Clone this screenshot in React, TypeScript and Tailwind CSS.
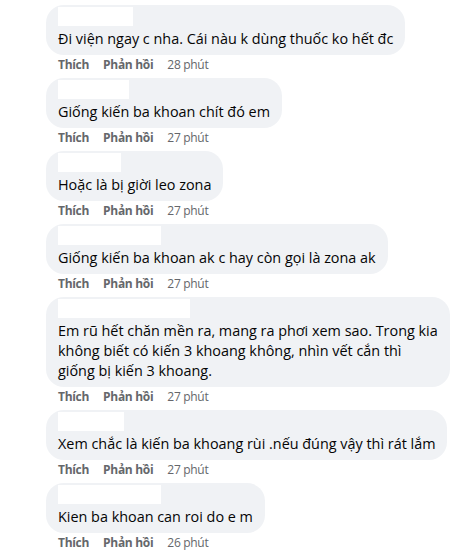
import React from "react";

type Comment = { nameW: number; text: string; time: string };

const comments: Comment[] = [
  { nameW: 75, text: "Đi viện ngay c nha. Cái nàu k dùng thuốc ko hết đc", time: "28 phút" },
  { nameW: 71, text: "Giống kiến ba khoan chít đó em", time: "27 phút" },
  { nameW: 63, text: "Hoặc là bị giời leo zona", time: "27 phút" },
  { nameW: 103, text: "Giống kiến ba khoan ak c hay còn gọi là zona ak", time: "27 phút" },
  {
    nameW: 132,
    text: "Em rũ hết chăn mền ra, mang ra phơi xem sao. Trong kia không biết có kiến 3 khoang không, nhìn vết cắn thì giống bị kiến 3 khoang.",
    time: "27 phút",
  },
  { nameW: 66, text: "Xem chắc là kiến ba khoang rùi .nếu đúng vậy thì rát lắm", time: "27 phút" },
  { nameW: 103, text: "Kien ba khoan can roi do e m", time: "26 phút" },
];

export default function App() {
  return (
    <div className="w-[474px] h-[557px] bg-white overflow-hidden pl-[46px] pt-[5px] font-['Open_Sans',sans-serif]">
      <div className="flex flex-col">
        {comments.map((c, i) => (
          <div key={i} className="flex flex-col items-start">
            <div className="max-w-[404px] rounded-[18px] bg-[#f0f2f5] px-3 pt-[2px] pb-[6px]">
              <div className="h-[19px] bg-white" style={{ width: c.nameW }} />
              <p className="mt-[3px] text-[14.4px] leading-[20px] text-[#050505]">{c.text}</p>
            </div>
            <div className="flex items-center gap-[14px] pl-3 pt-[2px] pb-[5px] text-[12px] leading-[16px] tracking-[-0.3px] text-[#65676b]">
              <span className="font-bold">Thích</span>
              <span className="font-bold">Phản hồi</span>
              <span>{c.time}</span>
            </div>
          </div>
        ))}
      </div>
    </div>
  );
}
